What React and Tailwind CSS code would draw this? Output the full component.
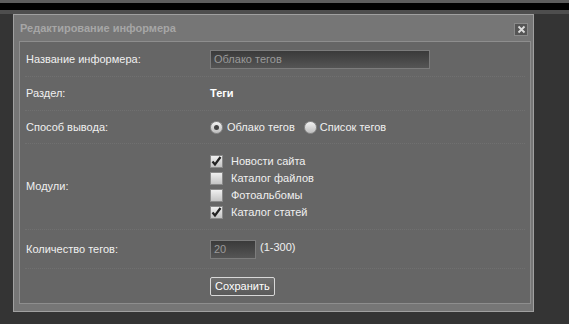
import React from "react";

const font = { fontFamily: '"Liberation Sans", Arial, sans-serif' };

function Radio({ checked }) {
  return (
    <span className="relative inline-flex h-[13px] w-[13px] shrink-0 items-center justify-center rounded-full border border-[#8d8d8d] bg-gradient-to-b from-[#f2f2f2] to-[#bdbdbd]">
      {checked && <span className="h-[5px] w-[5px] rounded-full bg-[#444]" />}
    </span>
  );
}

function Check({ checked }) {
  return (
    <span className="inline-flex h-[13px] w-[13px] shrink-0 items-center justify-center border border-[#8a8a8a] bg-gradient-to-b from-[#f0f0f0] to-[#c4c4c4]">
      {checked && (
        <svg width="11" height="11" viewBox="0 0 11 11">
          <path d="M1.5 5.5 L4 8.5 L9.5 1" fill="none" stroke="#222" strokeWidth="2.2" />
        </svg>
      )}
    </span>
  );
}

function Row({ h, label, children, last }) {
  return (
    <div
      className={`flex items-center ${h} ${last ? "" : "border-b border-dotted border-[#707070]"} mx-[5px]`}
    >
      <div className="w-[185px] pl-[1px] text-[11px] text-[#f0f0f0]">{label}</div>
      <div className="flex-1 text-[11px] text-[#f0f0f0]">{children}</div>
    </div>
  );
}

export default function App() {
  return (
    <div className="h-[324px] w-[569px] overflow-hidden bg-[#343434]" style={font}>
      <div className="h-[3px] bg-[#5c5c5c]" />
      <div className="h-[7px] bg-black" />
      <div className="h-[4px] bg-[#4e4e4e]" />
      <div className="ml-[13px] flex h-[298px] w-[521px] flex-col border border-[#a0a0a0] bg-[#767676] pb-[7px] pl-[5px] pr-[2px]">
        <div className="flex h-[26px] items-center justify-between pl-[1px] pr-[3px]">
          <span className="text-[11px] font-bold text-[#a6a6a6]">Редактирование информера</span>
          <span className="mt-[2px] flex h-[13px] w-[14px] items-center justify-center border border-[#8a8a8a] bg-[#555]">
            <svg width="9" height="9" viewBox="0 0 9 9">
              <path d="M1.5 1.5 L7.5 7.5 M7.5 1.5 L1.5 7.5" stroke="#dcdcdc" strokeWidth="1.8" />
            </svg>
          </span>
        </div>
        <div className="flex flex-1 flex-col border border-[#8e8e8e] bg-[#666666]">
          <Row h="h-[35px]" label="Название информера:">
            <div className="flex h-[19px] w-[220px] items-center border border-[#7c7c7c] bg-gradient-to-b from-[#3a3a3a] to-[#555] pl-[3px] text-[#9a9a9a]">
              Облако тегов
            </div>
          </Row>
          <Row h="h-[34px]" label="Раздел:">
            <span className="font-bold text-white">Теги</span>
          </Row>
          <Row h="h-[33px]" label="Способ вывода:">
            <div className="flex items-center">
              <Radio checked />
              <span className="ml-[4px]">Облако тегов</span>
              <span className="ml-[9px] flex items-center">
                <Radio />
                <span className="ml-[3px]">Список тегов</span>
              </span>
            </div>
          </Row>
          <Row h="h-[86px]" label="Модули:">
            <div className="flex flex-col gap-[4px]">
              {[
                ["Новости сайта", true],
                ["Каталог файлов", false],
                ["Фотоальбомы", false],
                ["Каталог статей", true],
              ].map(([t, c]) => (
                <div key={t} className="flex h-[13px] items-center">
                  <Check checked={c} />
                  <span className="ml-[8px]">{t}</span>
                </div>
              ))}
            </div>
          </Row>
          <Row h="h-[39px]" label="Количество тегов:">
            <div className="flex items-center">
              <div className="flex h-[19px] w-[46px] items-center border border-[#7c7c7c] bg-gradient-to-b from-[#3a3a3a] to-[#555] pl-[3px] text-[#9a9a9a]">
                20
              </div>
              <span className="ml-[4px] -mt-[4px]">(1-300)</span>
            </div>
          </Row>
          <div className="mx-[5px] flex flex-1 items-center pl-[185px]">
            <button className="flex h-[19px] items-center rounded-[2px] border border-[#d8d8d8] bg-gradient-to-b from-[#707070] to-[#5a5a5a] px-[4px] text-[11px] text-white">
              Сохранить
            </button>
          </div>
        </div>
      </div>
    </div>
  );
}
